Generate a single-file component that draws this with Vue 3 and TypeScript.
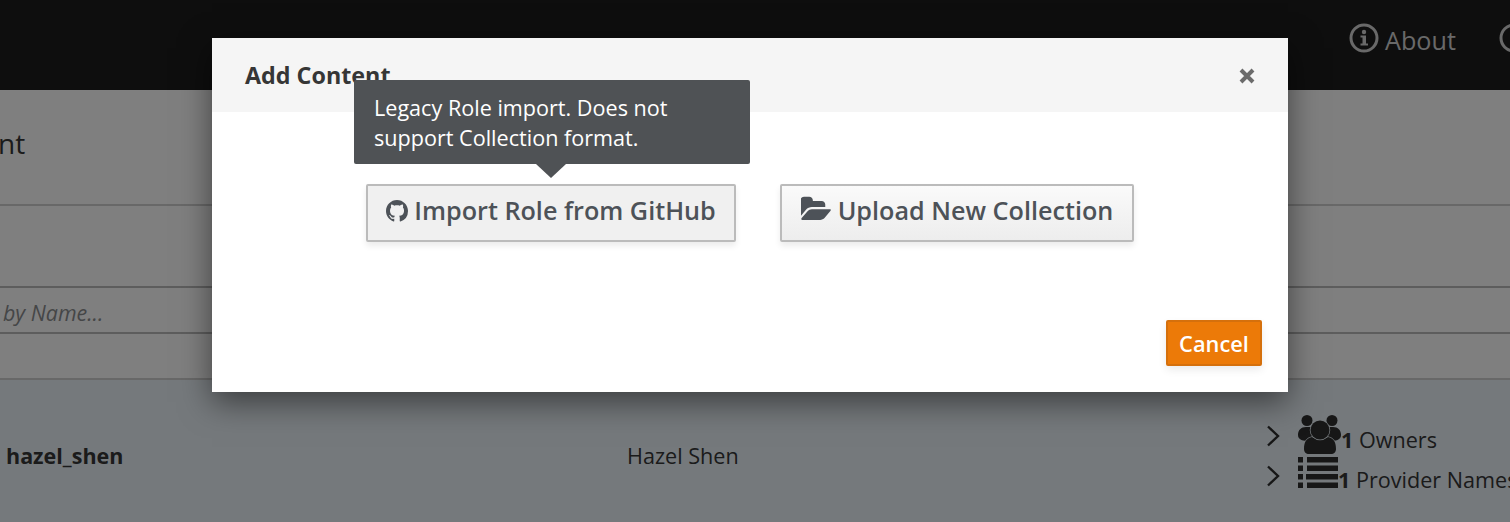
<script setup lang="ts">
const title = 'Add Content'
</script>

<template>
  <div class="page">
    <header class="topbar">
      <span class="nav-item">
        <svg class="nav-icon" viewBox="0 0 30 30">
          <circle cx="15" cy="15" r="13" fill="none" stroke="currentColor" stroke-width="3" />
          <circle cx="15" cy="9" r="2.2" fill="currentColor" />
          <path d="M11.500 12.500h5.500v8h2v2h-7.500v-2h2v-6h-2z" fill="currentColor" />
        </svg>
        About
      </span>
      <span class="nav-item nav-cut">
        <svg class="nav-icon" viewBox="0 0 30 30">
          <circle cx="15" cy="15" r="13" fill="none" stroke="currentColor" stroke-width="3" />
        </svg>
      </span>
    </header>

    <section class="upper">
      <div class="heading">nt</div>
      <div class="filter-gap"></div>
      <div class="filter">by Name...</div>
      <div class="filter-foot"></div>
    </section>

    <section class="row">
      <div class="name">hazel_shen</div>
      <div class="full-name">Hazel Shen</div>
      <div class="stats">
        <div class="stat">
          <svg class="chev" viewBox="0 0 14 22"><path d="M2 1.500l10 9.500-10 9.500" fill="none" stroke="currentColor" stroke-width="2.400" /></svg>
          <svg class="users" viewBox="0 0 43 39">
            <circle cx="9" cy="5.500" r="5.500" /><circle cx="34" cy="5.500" r="5.500" />
            <path d="M0 20c0-5 3-8 8-8h5c2 2 3 5 4 8l-5 6c-7 0-12-1-12-6zM43 20c0-5-3-8-8-8h-5c-2 2-3 5-4 8l5 6c7 0 12-1 12-6z" />
            <path class="sep" d="M6 34c0-8 3-11 8-12 2 1.500 5 2.500 8 2.500s6-1 8-2.500c5 1 8 4 8 12 0 3-2 5-5 5H11c-3 0-5-2-5-5z" />
            <circle class="sep" cx="22" cy="15" r="9.500" />
          </svg>
          <span><b>1</b> Owners</span>
        </div>
        <div class="stat stat-second">
          <svg class="chev" viewBox="0 0 14 22"><path d="M2 1.500l10 9.500-10 9.500" fill="none" stroke="currentColor" stroke-width="2.400" /></svg>
          <svg class="list" viewBox="0 0 40 31">
            <rect x="0" y="0" width="5" height="5.500" /><rect x="9" y="0" width="31" height="5.500" />
            <rect x="0" y="8.500" width="5" height="5.500" /><rect x="9" y="8.500" width="31" height="5.500" />
            <rect x="0" y="17" width="5" height="5.500" /><rect x="8" y="17" width="32" height="5.500" />
            <rect x="0" y="25.500" width="5" height="5.500" /><rect x="9" y="25.500" width="31" height="5.500" />
          </svg>
          <span class="nogap"><b>1</b> Provider Names</span>
        </div>
      </div>
    </section>

    <div class="backdrop"></div>

    <div class="modal">
      <div class="modal-head">
        <h4 class="modal-title">{{ title }}</h4>
        <svg class="close" viewBox="0 0 16 16"><path d="M2 2l12 12M14 2L2 14" fill="none" stroke="currentColor" stroke-width="4" /></svg>
      </div>
      <div class="modal-body">
        <button class="btn btn-hover" type="button">
          <svg class="gh" viewBox="0 0 16 16"><path fill="currentColor" d="M8 0C3.580 0 0 3.580 0 8c0 3.540 2.290 6.530 5.470 7.590.4.070.55-.17.55-.38 0-.19-.01-.82-.01-1.490-2.010.37-2.530-.49-2.690-.94-.09-.23-.48-.94-.82-1.130-.28-.15-.68-.52-.01-.53.63-.01 1.080.58 1.230.82.72 1.210 1.870.87 2.330.66.070-.52.28-.87.51-1.070-1.780-.2-3.640-.89-3.640-3.950 0-.87.31-1.590.82-2.150-.08-.2-.36-1.020.08-2.120 0 0 .67-.21 2.200.82.64-.18 1.320-.27 2-.27.68 0 1.360.09 2 .27 1.530-1.040 2.200-.82 2.200-.82.44 1.100.16 1.920.08 2.120.51.56.82 1.270.82 2.150 0 3.070-1.870 3.750-3.650 3.950.29.25.54.73.54 1.480 0 1.070-.01 1.930-.01 2.200 0 .21.15.46.55.38A8.013 8.013 0 0016 8c0-4.420-3.580-8-8-8z" /></svg>
          Import Role from GitHub
        </button>
        <button class="btn btn-upload" type="button">
          <svg class="folder" viewBox="0 0 1920 1792"><path fill="currentColor" d="M1845 931q0 35-53 93l-336 396q-43 51-120.500 86.500t-143.500 35.500h-1088q-34 0-60.500-13t-26.500-43q0-35 53-93l336-396q43-51 120.500-86.500t143.500-35.500h1088q34 0 60.500 13t26.500 43zm-343-344v160h-832q-94 0-197 47.500t-164 119.500l-337 396-5 6q0-4-.5-12.500t-.5-12.500v-960q0-92 66-158t158-66h320q92 0 158 66t66 158v32h544q92 0 158 66t66 158z" /></svg>
          Upload New Collection
        </button>
      </div>
      <div class="modal-foot">
        <button class="cancel" type="button">Cancel</button>
      </div>
      <div class="tooltip">
        Legacy Role import. Does not support Collection format.
        <span class="arrow"></span>
      </div>
    </div>
  </div>
</template>

<style scoped>
.page {
  position: relative;
  width: 1510px;
  height: 522px;
  overflow: hidden;
  background: #fff;
  font-family: "Open Sans", "Noto Sans", sans-serif;
  color: #363636;
}
.topbar {
  height: 90px;
  background: #1c1c1c;
  display: flex;
  padding-left: 1349px;
  box-sizing: border-box;
  color: #d2d2d2;
  gap: 43px;
  font-size: 25.200px;
}
.nav-item {
  display: flex;
  align-items: center;
  gap: 6px;
  height: 80px;
  white-space: nowrap;
}
.nav-icon { width: 30px; height: 30px; margin-top: -5px; flex: none; }
.upper { background: #fff; height: 290px; box-sizing: border-box; }
.heading {
  height: 116px;
  font-size: 28px;
  line-height: 106px;
  margin-left: -2px;
  border-bottom: 2px solid #d1d1d1;
  box-sizing: border-box;
  color: #363636;
}
.filter-gap { height: 82px; border-bottom: 2px solid #bbb; box-sizing: border-box; }
.filter {
  height: 46px;
  border-bottom: 2px solid #bbb;
  box-sizing: border-box;
  line-height: 50px;
  font-size: 21.400px;
  font-style: italic;
  color: #8b8d8f;
  padding-left: 3px;
}
.filter-foot { height: 46px; border-bottom: 2px solid #d1d1d1; box-sizing: border-box; }
.row {
  height: 142px;
  background: #eaf3f9;
  position: relative;
  display: flex;
  color: #363636;
  font-size: 21.600px;
}
.name {
  width: 627px;
  flex: none;
  box-sizing: border-box;
  padding: 61px 0 0 6px;
  font-weight: 700;
  font-size: 21.500px;
}
.full-name { width: 639px; padding-top: 61px; flex: none; }
.stats { padding-top: 34px; white-space: nowrap; }
.stat { display: flex; align-items: flex-end; height: 40px; }
.chev { width: 14px; height: 22px; margin: 0 18px 7px 0; color: #2f2f2f; flex: none; }
.users { width: 43px; height: 39px; fill: #2f2f2f; flex: none; margin-bottom: 0; }
.sep { stroke: #eaf3f9; stroke-width: 1.500; paint-order: stroke; }
.list { width: 40px; height: 31px; fill: #2f2f2f; flex: none; margin-bottom: 6px; }
.stat span { margin: 0 0 -1px 0; line-height: 30px; }
.stat b { font-weight: 700; }
.backdrop {
  position: absolute;
  inset: 0;
  background: rgba(0, 0, 0, 0.5);
}
.modal {
  position: absolute;
  left: 212px;
  top: 38px;
  width: 1076px;
  height: 354px;
  background: #fff;
  box-shadow: 0 10px 30px rgba(0, 0, 0, 0.5);
  display: flex;
  flex-direction: column;
}
.modal-head {
  height: 74px;
  background: #f5f5f5;
  display: flex;
  align-items: center;
  justify-content: space-between;
  padding: 0 33.500px 0 33px;
  flex: none;
}
.modal-title { margin: 0; font-size: 23.300px; font-weight: 700; color: #363636; }
.close { width: 16px; height: 16px; color: #6b6b6b; margin-top: 2px; }
.modal-body {
  display: flex;
  gap: 44px;
  padding: 72px 0 0 154px;
  flex: none;
}
.btn {
  width: 370px;
  height: 58px;
  box-sizing: border-box;
  display: flex;
  align-items: center;
  justify-content: center;
  gap: 6px;
  padding: 0 0 7px;
  font-family: inherit;
  font-size: 25.200px;
  font-weight: 600;
  color: #4d5258;
  background: linear-gradient(#fafafa, #ededed);
  border: 2px solid #bbb;
  border-radius: 2px;
  box-shadow: 0 4px 6px rgba(3, 3, 3, 0.08);
  white-space: nowrap;
}
.btn-hover { background: #f0f0f0; }
.btn-upload { width: 354px; }
.gh { width: 22px; height: 22px; flex: none; margin-top: 3px; }
.folder { width: 31px; height: 29px; flex: none; margin-top: 0; }
.modal-foot {
  margin-top: auto;
  display: flex;
  justify-content: flex-end;
  padding: 0 26px 26px 0;
}
.cancel {
  width: 96px;
  height: 46px;
  box-sizing: border-box;
  font-family: inherit;
  font-size: 21.800px;
  font-weight: 600;
  color: #fff;
  background: #ec7a08;
  border: 2px solid #d5700c;
  border-radius: 2px;
  box-shadow: 0 4px 8px rgba(3, 3, 3, 0.08);
  padding: 0;
}
.tooltip {
  position: absolute;
  left: 142px;
  top: 42px;
  width: 396px;
  height: 84px;
  box-sizing: border-box;
  padding: 12.500px 20px;
  background: #4f5255;
  color: #fff;
  font-size: 21.600px;
  line-height: 30px;
  border-radius: 2px;
}
.arrow {
  position: absolute;
  left: 182px;
  bottom: -14px;
  width: 0;
  height: 0;
  border-left: 15px solid transparent;
  border-right: 15px solid transparent;
  border-top: 14px solid #4f5255;
}
</style>
